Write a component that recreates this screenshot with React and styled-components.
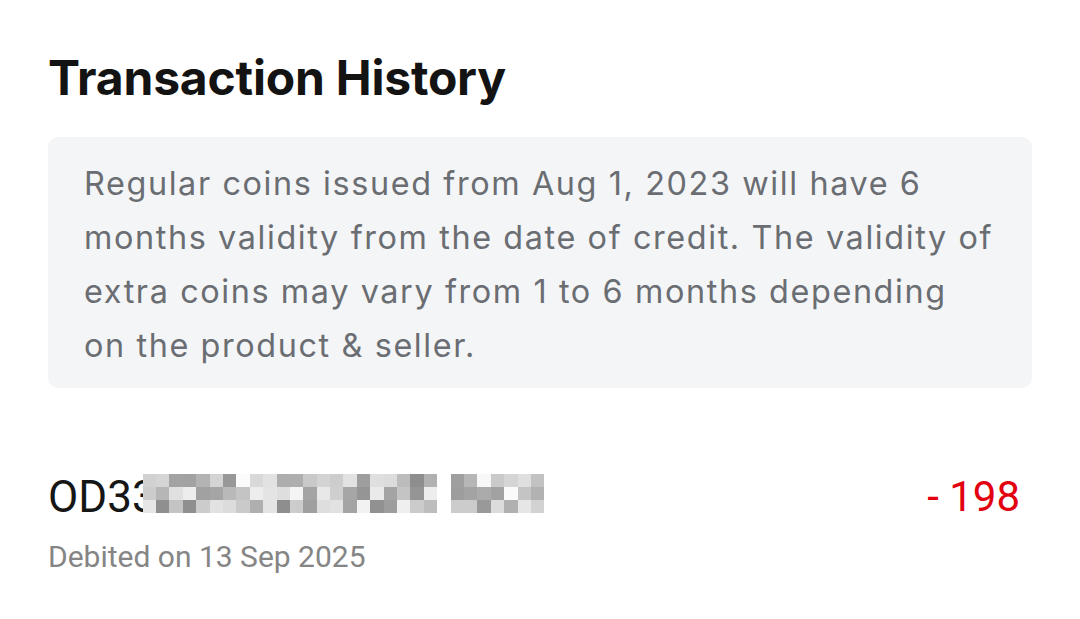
import styled, { createGlobalStyle } from 'styled-components';

const GlobalStyle = createGlobalStyle`
   html, body {
      margin: 0;
      padding: 0;
      background: #ffffff;
   }
`;

const Page = styled.div`
   width: 1080px;
   height: 619px;
   box-sizing: border-box;
   padding: 48px 48px 0 48px;
   display: flex;
   flex-direction: column;
   overflow: hidden;
`;

const Title = styled.h1`
   margin: 0;
   font-family: Inter, 'Noto Sans', sans-serif;
   font-weight: 700;
   font-size: 48px;
   line-height: 60px;
   color: #131313;
   letter-spacing: -0.2px;
`;

const InfoBox = styled.div`
   margin-top: 29px;
   background: #f4f5f7;
   border-radius: 10px;
   padding: 20px 20px 15px 36px;
`;

const InfoText = styled.p`
   margin: 0;
   font-family: Inter, 'Noto Sans', sans-serif;
   font-size: 32.4px;
   line-height: 54px;
   color: #6a6d72;
   letter-spacing: 1.6px;
   white-space: nowrap;
`;

const TxRow = styled.div`
   margin-top: 83px;
   display: flex;
   justify-content: space-between;
   align-items: flex-start;
   padding-right: 12px;
`;

const TxInfo = styled.div`
   display: flex;
   flex-direction: column;
`;

const OrderId = styled.div`
   display: flex;
   align-items: center;
   font-family: Roboto, 'Liberation Sans', sans-serif;
   font-size: 44px;
   line-height: 52px;
   color: #161616;
`;

const Mosaic = styled.div`
   display: grid;
   grid-template-columns: repeat(30, 13.4px);
   grid-auto-rows: 13px;
   margin-left: -14px;
   margin-top: -8px;
`;

const Cell = styled.span`
   display: block;
`;

const DateText = styled.div`
   margin-top: 16px;
   font-family: Roboto, 'Liberation Sans', sans-serif;
   font-size: 30px;
   line-height: 36px;
   color: #858585;
`;

const Amount = styled.div`
   font-family: Roboto, 'Liberation Sans', sans-serif;
   font-size: 42px;
   line-height: 52px;
   color: #e3000f;
`;

// pseudo-random grey levels for the redacted part of the order id
const shades = Array.from({ length: 90 }, (_, i) => {
   const v = Math.abs(Math.sin(i * 12.9898 + 4.1) * 43758.5453) % 1;
   const col = i % 30;
   if (col === 22) return 255;
   return Math.round(140 + v * 112);
});

function App() {
   return (
      <>
         <GlobalStyle />
         <Page>
            <Title>Transaction History</Title>
            <InfoBox>
               <InfoText>
                  Regular coins issued from Aug 1, 2023 will have 6
                  <br />
                  months validity from the date of credit. The validity of
                  <br />
                  extra coins may vary from 1 to 6 months depending
                  <br />
                  on the product &amp; seller.
               </InfoText>
            </InfoBox>
            <TxRow>
               <TxInfo>
                  <OrderId>
                     OD33
                     <Mosaic>
                        {shades.map((s, i) => (
                           <Cell
                              key={i}
                              style={{ background: `rgb(${s},${s},${s})` }}
                           />
                        ))}
                     </Mosaic>
                  </OrderId>
                  <DateText>Debited on 13 Sep 2025</DateText>
               </TxInfo>
               <Amount>- 198</Amount>
            </TxRow>
         </Page>
      </>
   );
}

export default App;
